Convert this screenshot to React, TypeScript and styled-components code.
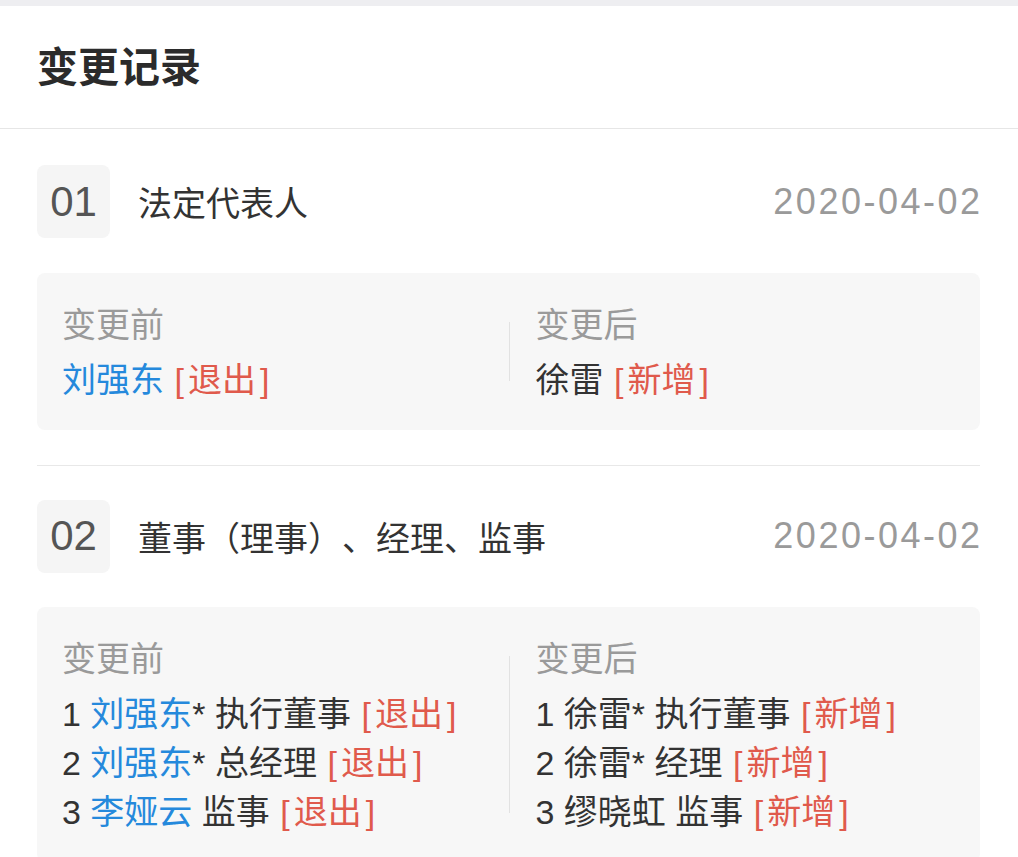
import React from "react";
import styled, { createGlobalStyle } from "styled-components";

const Global = createGlobalStyle`
  html, body { margin: 0; padding: 0; background: #ffffff; }
  body {
    font-family: "Liberation Sans", "Noto Sans CJK SC", sans-serif;
    color: #333333;
    text-spacing-trim: space-all;
  }
  * { box-sizing: border-box; }
`;

const Page = styled.div`
  width: 1018px;
  min-height: 857px;
  background: #ffffff;
  border-top: 6px solid #eeeef1;
  overflow: hidden;
`;

const Header = styled.header`
  height: 123px;
  display: flex;
  align-items: center;
  padding: 0 37px 6px;
  border-bottom: 1px solid #e6e6e6;
`;

const Title = styled.h1`
  margin: 0;
  font-family: "Noto Sans CJK SC", sans-serif;
  font-size: 41px;
  font-weight: 700;
  color: #2b2b2b;
`;

const List = styled.div`
  padding: 2px 38px 0 37px;
`;

const Item = styled.section<{ last?: boolean }>`
  padding: 34px 0 35px;
  border-bottom: ${(p) => (p.last ? "none" : "1px solid #e8e8e8")};
`;

const ItemHead = styled.div`
  display: flex;
  align-items: center;
  height: 73px;
`;

const Num = styled.div`
  width: 73px;
  height: 73px;
  border-radius: 8px;
  background: #f5f5f5;
  display: flex;
  align-items: center;
  justify-content: center;
  font-family: "Liberation Sans", sans-serif;
  font-size: 42px;
  color: #555555;
  flex-shrink: 0;
`;

const ItemTitle = styled.div`
  margin-left: 28px;
  flex: 1;
  font-family: "Noto Sans CJK SC", sans-serif;
  font-size: 34px;
  color: #333333;
  text-spacing-trim: space-all;
  font-feature-settings: "halt" 0, "chws" 0;
`;

const DateText = styled.div`
  font-family: "Liberation Sans", sans-serif;
  font-size: 36px;
  color: #9a9a9a;
  letter-spacing: 2.5px;
  margin-right: -2.5px;
`;

const Card = styled.div`
  margin-top: 34.5px;
  background: #f7f7f7;
  border-radius: 8px;
  display: grid;
  grid-template-columns: 1fr 1fr;
  padding: 25px 0 25px;
`;

const Col = styled.div<{ right?: boolean }>`
  position: relative;
  padding-left: ${(p) => (p.right ? "27px" : "25px")};
  font-size: 34px;
  line-height: 49px;
  &::before {
    content: "";
    display: ${(p) => (p.right ? "block" : "none")};
    position: absolute;
    left: 0;
    top: 24px;
    bottom: 24px;
    width: 1px;
    background: #e2e2e2;
  }
`;

const Label = styled.div`
  font-family: "Noto Sans CJK SC", sans-serif;
  color: #9a9a9a;
  margin-bottom: 9px;
`;

const Line = styled.div`
  color: #333333;
  white-space: nowrap;
`;

const Name = styled.span`
  color: #2589dc;
`;

const Tag = styled.span`
  color: #e05a4c;
`;

const Bracket = styled.span<{ open?: boolean }>`
  margin: ${(p) => (p.open ? "0 4px 0 1px" : "0 0 0 4px")};
`;

type Entry = { idx?: string; name: string; blue?: boolean; star?: boolean; role?: string; tag: string };

const renderEntry = (e: Entry, i: number) => (
  <Line key={i}>
    {e.idx ? `${e.idx} ` : ""}
    {e.blue ? <Name>{e.name}</Name> : e.name}
    {e.star ? "*" : ""}
    {e.role ? ` ${e.role}` : ""}{" "}
    <Tag>
      <Bracket open>[</Bracket>
      {e.tag}
      <Bracket>]</Bracket>
    </Tag>
  </Line>
);

const items: { num: string; title: string; date: string; before: Entry[]; after: Entry[] }[] = [
  {
    num: "01",
    title: "法定代表人",
    date: "2020-04-02",
    before: [{ name: "刘强东", blue: true, tag: "退出" }],
    after: [{ name: "徐雷", tag: "新增" }],
  },
  {
    num: "02",
    title: "董事（理事）、经理、监事",
    date: "2020-04-02",
    before: [
      { idx: "1", name: "刘强东", blue: true, star: true, role: "执行董事", tag: "退出" },
      { idx: "2", name: "刘强东", blue: true, star: true, role: "总经理", tag: "退出" },
      { idx: "3", name: "李娅云", blue: true, role: "监事", tag: "退出" },
    ],
    after: [
      { idx: "1", name: "徐雷", star: true, role: "执行董事", tag: "新增" },
      { idx: "2", name: "徐雷", star: true, role: "经理", tag: "新增" },
      { idx: "3", name: "缪晓虹", role: "监事", tag: "新增" },
    ],
  },
];

export default function App() {
  return (
    <Page>
      <Global />
      <Header>
        <Title>变更记录</Title>
      </Header>
      <List>
        {items.map((it, k) => (
          <Item key={it.num} last={k === items.length - 1}>
            <ItemHead>
              <Num>{it.num}</Num>
              <ItemTitle>{it.title}</ItemTitle>
              <DateText>{it.date}</DateText>
            </ItemHead>
            <Card>
              <Col>
                <Label>变更前</Label>
                {it.before.map(renderEntry)}
              </Col>
              <Col right>
                <Label>变更后</Label>
                {it.after.map(renderEntry)}
              </Col>
            </Card>
          </Item>
        ))}
      </List>
    </Page>
  );
}
